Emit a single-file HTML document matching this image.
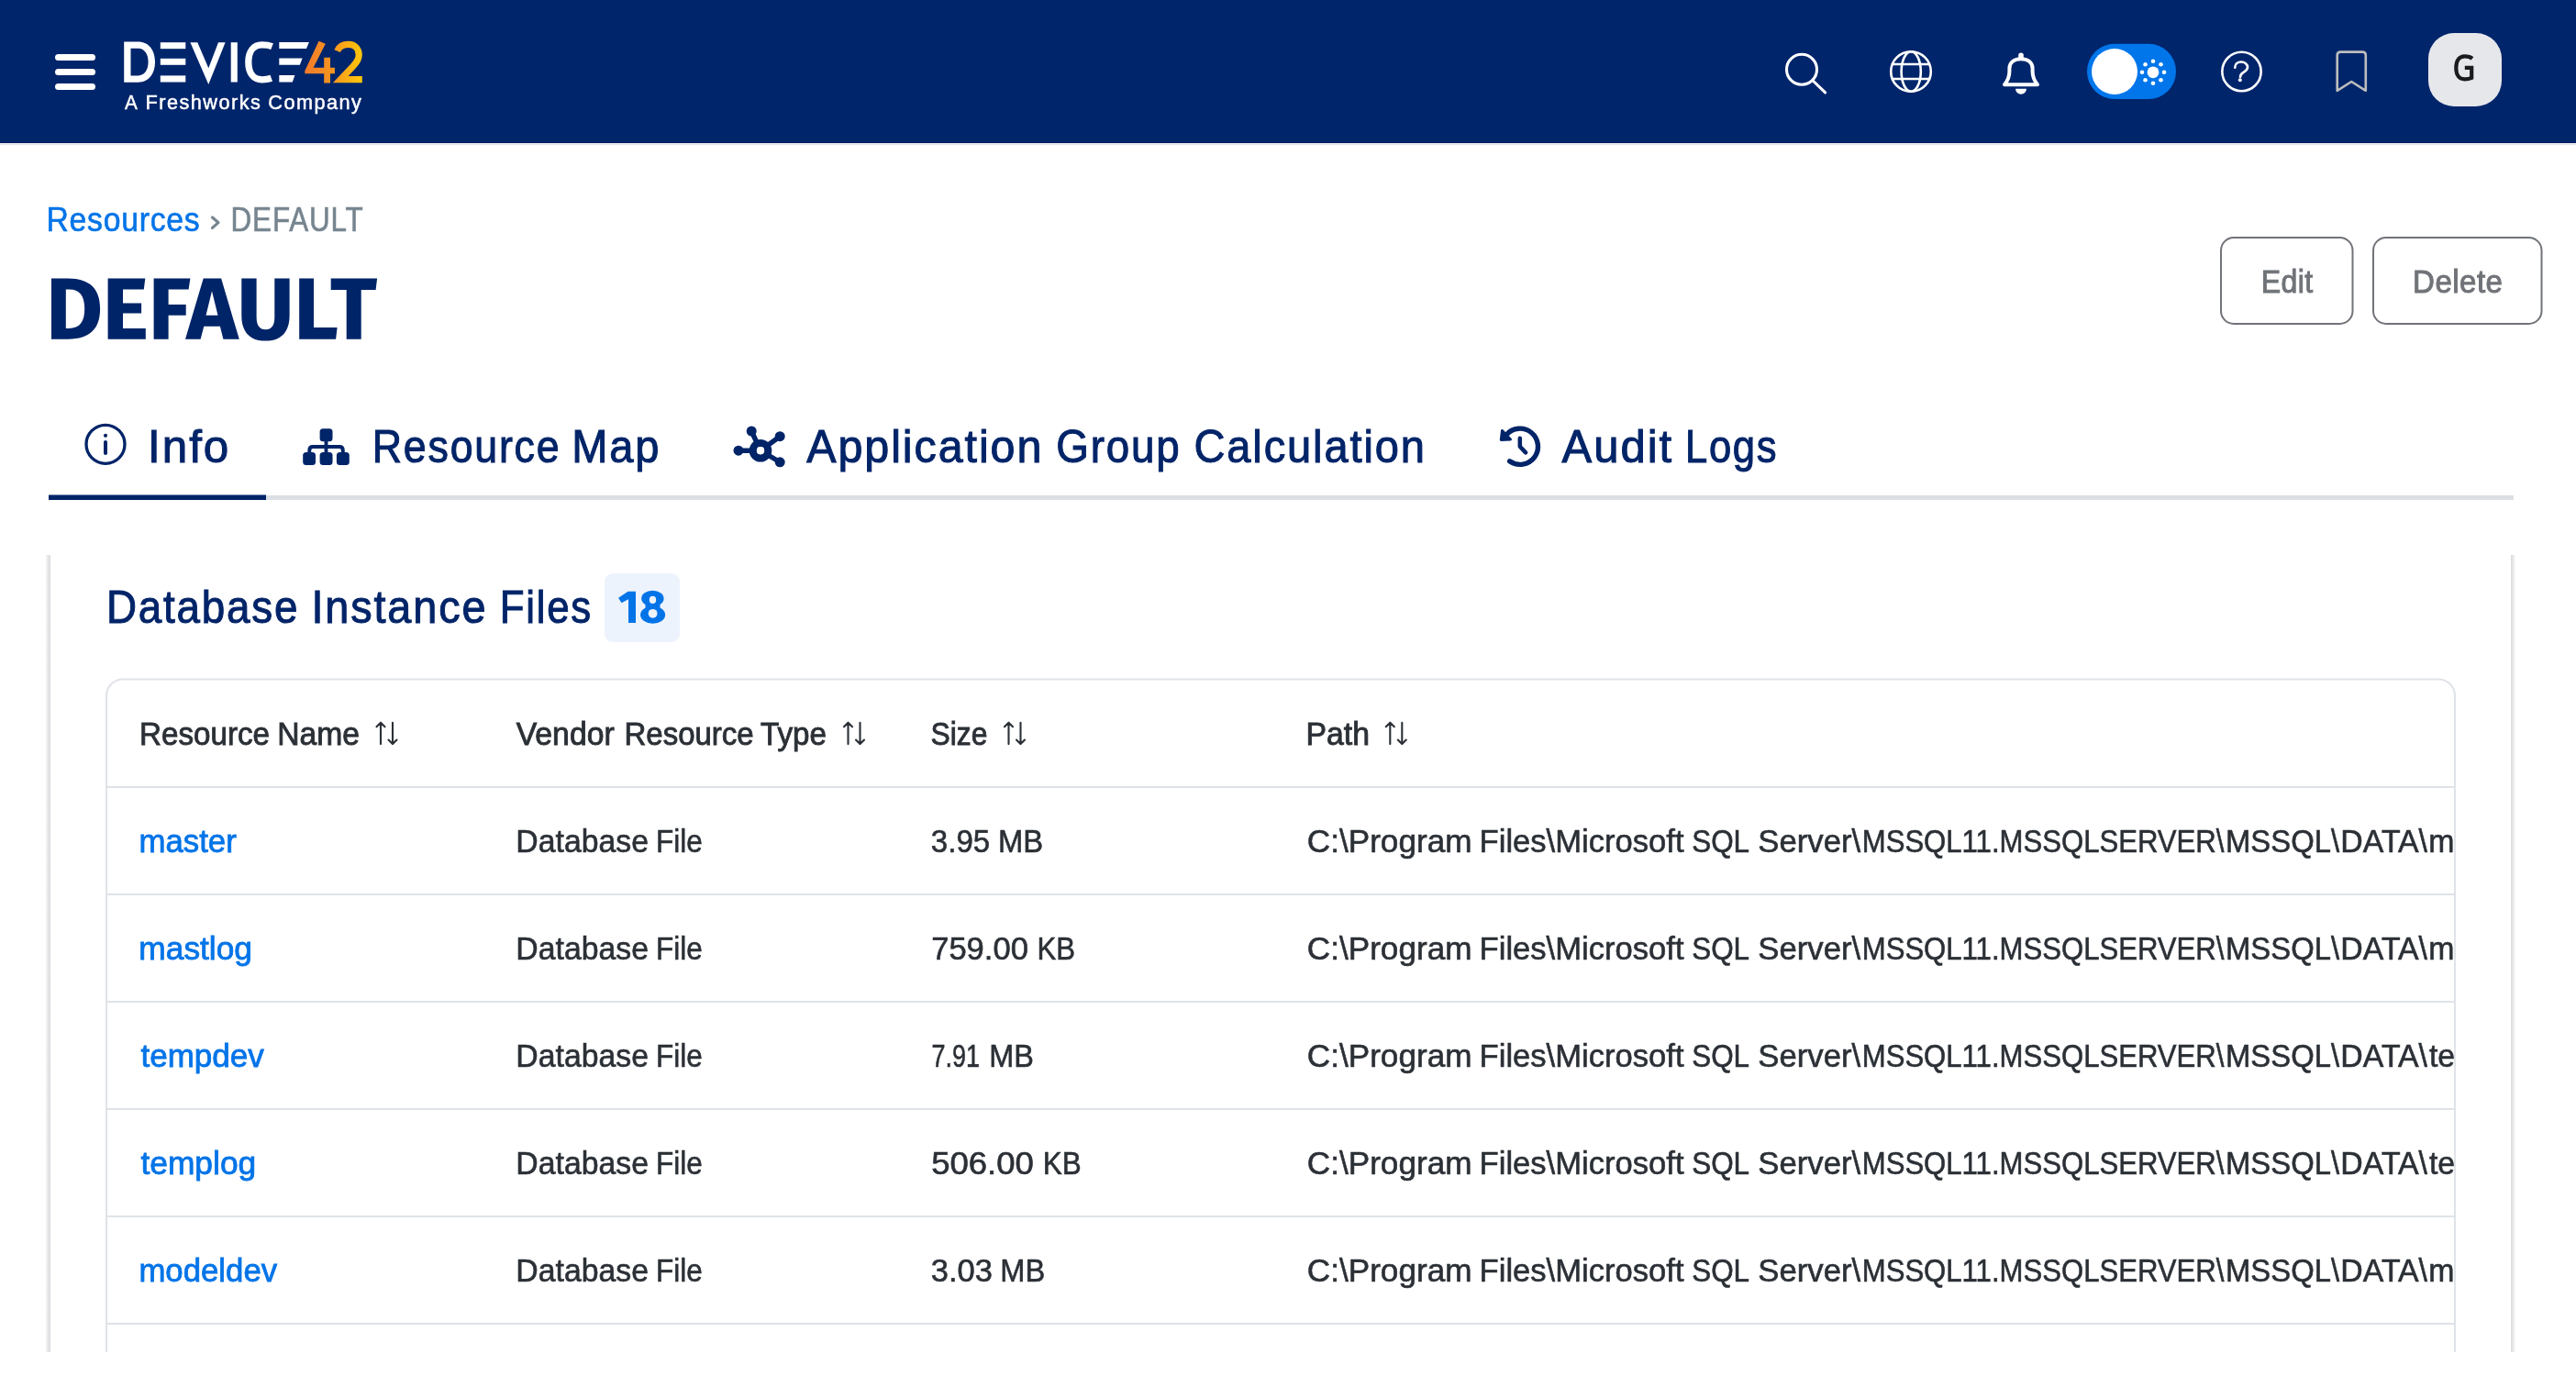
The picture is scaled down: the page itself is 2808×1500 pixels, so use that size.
<!DOCTYPE html>
<html><head><meta charset="utf-8"><title>DEFAULT - Resources</title>
<style>html,body{margin:0;padding:0;background:#fff;width:2808px;height:1500px;overflow:hidden;font-family:"Liberation Sans", sans-serif;}</style>
</head><body>
<svg width="2808" height="1500" viewBox="0 0 2808 1500" style="position:absolute;left:0;top:0;font-family:'Liberation Sans', sans-serif">
<rect x="0" y="0" width="2808" height="155" fill="#00256b"/><rect x="0" y="155" width="2808" height="1" fill="#001a62"/><rect x="0" y="156" width="2808" height="1" fill="#eceeef"/><rect x="0" y="157" width="2808" height="1.2" fill="#e2e5e8"/><rect x="60" y="59" width="44" height="7" rx="3.5" fill="#fff"/><rect x="60" y="75" width="44" height="7" rx="3.5" fill="#fff"/><rect x="60" y="91" width="44" height="7" rx="3.5" fill="#fff"/>
<g fill="#fff">
<path fill-rule="evenodd" d="M135.2,45.4 H150.5 C162.5,45.4 169,55 169,67.5 C169,80 162.5,89.7 150.5,89.7 H135.2 Z M142.5,52.8 H150.5 C157.5,52.8 161.6,59 161.6,67.5 C161.6,76 157.5,82.4 150.5,82.4 H142.5 Z"/>
<rect x="174.8" y="46.2" width="27.5" height="7"/>
<rect x="174.8" y="63.8" width="27.5" height="7"/>
<rect x="174.8" y="82.4" width="27.5" height="7.1"/>
<path d="M207.4,46.2 H215.3 L227.3,74.3 L238,46.2 H245.6 L227.3,91.9 Z"/>
<rect x="251.7" y="46.2" width="7.1" height="43.3"/>
<path d="M296.6,50.6 C293,49.2 289.5,48.9 285.5,48.9 C276.5,48.9 270.8,56 270.8,67.8 C270.8,79.8 276.5,86.8 285.5,86.8 C289.5,86.8 292.5,86.4 295.8,85.2" fill="none" stroke="#fff" stroke-width="7.3"/>
<path d="M304.3,46 H336.9 L334,53 H304.3 Z M304.3,63.6 H329.6 L326.9,70.7 H304.3 Z M304.3,82.1 H321.4 L318.8,89.5 H304.3 Z"/>
</g>
<defs><linearGradient id="lg" x1="332" y1="0" x2="395" y2="0" gradientUnits="userSpaceOnUse"><stop offset="0" stop-color="#f37a2c"/><stop offset="0.5" stop-color="#f7961f"/><stop offset="1" stop-color="#ffc80a"/></linearGradient>
<clipPath id="tclip"><rect x="0" y="0" width="2675" height="1500"/></clipPath>
<linearGradient id="pl" x1="0" y1="0" x2="1" y2="0"><stop offset="0" stop-color="#f5f5f6"/><stop offset="1" stop-color="#d9dadd"/></linearGradient>
<linearGradient id="pr" x1="0" y1="0" x2="1" y2="0"><stop offset="0" stop-color="#d9dadd"/><stop offset="1" stop-color="#f5f5f6"/></linearGradient>
</defs>
<path fill="url(#lg)" d="M347.5,44.8 L354.8,47.8 L341.6,73.7 H353.2 V62.8 H360 V73.7 H364.9 V80.2 H360 V90.5 H353.2 V80.2 H332.3 V77.2 Z"/>
<path fill="none" stroke="url(#lg)" stroke-width="7.2" stroke-linejoin="miter" d="M367.6,55.6 C369.8,50.5 374.5,48.4 380,48.4 C386.8,48.4 391.2,53.2 391.2,59.8 C391.2,64.6 389,67.8 385.6,71.4 L371.2,86.7 H394.8"/>

<g fill="none" stroke="#fff" stroke-linecap="round">
<circle cx="1964" cy="75.8" r="16.5" stroke-width="3.1"/>
<path d="M1976.2,88 L1989.6,100.9" stroke-width="3.1"/>
<circle cx="2083" cy="78" r="21.8" stroke-width="2.6"/>
<ellipse cx="2083.2" cy="78" rx="10.6" ry="21.8" stroke-width="2.6"/>
<path d="M2063,70 H2103 M2063,86 H2103" stroke-width="2.6"/>
<path d="M2185,92.3 C2188.5,88 2190.4,84 2190.4,78 V74.8 C2190.4,67.8 2196,64.3 2203,64.3 C2210,64.3 2215.6,67.8 2215.6,74.8 V78 C2215.6,84 2217.5,88 2221,92.3 Z" stroke-width="4" stroke-linejoin="round"/>
<circle cx="2443.5" cy="78" r="21.2" stroke-width="2.6"/>
<path d="M2436.2,73.8 C2436.2,69.5 2439.5,67.5 2443,67.5 C2447,67.5 2450,70 2450,73.2 C2450,76.5 2447.5,77.5 2445.5,78.8 C2443.5,80 2442,81 2442,84" stroke-width="2.6"/>
<path d="M2547.7,98.8 V60 C2547.7,57.6 2549.2,56.6 2551.5,56.6 H2575 C2577.3,56.6 2578.8,57.6 2578.8,60 V98.8 L2563.25,89 Z" stroke="#bdbdbd" stroke-width="2.6" stroke-linejoin="round"/>
</g>
<circle cx="2441.8" cy="87.3" r="2" fill="#fff"/>
<path d="M2197,96.8 H2209 A6,6 0 0 1 2197,96.8 Z" fill="#fff"/><rect x="2200.2" y="57.5" width="5.6" height="8" rx="2.8" fill="#fff"/>
<rect x="2275" y="47.7" width="97" height="60.3" rx="30.15" fill="#0076ea"/>
<circle cx="2305" cy="78" r="25" fill="#fff"/>
<circle cx="2347" cy="78.8" r="6.4" fill="#fff"/>
<circle cx="2359.00" cy="78.80" r="2.3" fill="#fff"/><circle cx="2355.49" cy="87.29" r="2.3" fill="#fff"/><circle cx="2347.00" cy="90.80" r="2.3" fill="#fff"/><circle cx="2338.51" cy="87.29" r="2.3" fill="#fff"/><circle cx="2335.00" cy="78.80" r="2.3" fill="#fff"/><circle cx="2338.51" cy="70.31" r="2.3" fill="#fff"/><circle cx="2347.00" cy="66.80" r="2.3" fill="#fff"/><circle cx="2355.49" cy="70.31" r="2.3" fill="#fff"/><rect x="2647" y="36" width="80" height="80" rx="28" fill="#e5e7eb"/><path d="M2695,63.8 C2692.8,62 2690.2,61.4 2686.6,61.4 C2680.2,61.4 2677.3,66.8 2677.3,73.9 C2677.3,81.2 2680.2,86.3 2686.6,86.3 C2689.6,86.3 2692.1,85.8 2694.2,84.8 V73.9 H2686.8" fill="none" stroke="#1b1b1d" stroke-width="4.2"/><rect x="2421" y="259" width="143.5" height="94" rx="14" fill="none" stroke="#707378" stroke-width="2"/><rect x="2587" y="259" width="183.5" height="94" rx="14" fill="none" stroke="#707378" stroke-width="2"/>
<path fill="#002468" fill-rule="evenodd" d="M56,303.6 H74 C98.5,303.6 109.1,315.5 109.1,336.6 C109.1,358 98.5,369.75 74,369.75 H56 Z M71.8,315.4 H75.2 C87,315.4 92.2,322.5 92.2,336.6 C92.2,351 87,358 75.2,358 H71.8 Z
M117.6,303.6 H158.3 L156.8,315.4 H134 V330.5 H154.1 V341.6 H134 V358 H158.8 V369.75 H117.6 Z
M167.6,303.6 H207.4 L205.6,315.4 H183.6 V332 H202.7 V343.7 H183.6 V369.75 H167.6 Z
M221.7,303.6 H241.1 L260.8,369.75 H243.4 L239.9,355.8 H222.3 L218.6,369.75 H202 Z M231,317.3 L237.5,343.7 H224.5 Z
M263.3,303.6 H279.6 V345.5 C279.6,355 283,359.2 289.5,359.2 C296,359.2 299.3,355 299.3,345.5 V303.6 H315.6 V344 C315.6,362.5 306,371.6 289.5,371.6 C273,371.6 263.3,362.5 263.3,344 Z
M326.2,303.6 H342 V356.9 H367.6 L366.1,369.75 H326.2 Z
M360.7,303.6 H411.1 L409.6,316 H393.7 V369.75 H377.7 V316 H360.7 Z"/>
<path d="M231.5,237 L238,242.6 L231.5,248.4" fill="none" stroke="#76858f" stroke-width="3.2" stroke-linecap="round" stroke-linejoin="round"/><rect x="53" y="540" width="2687" height="5" fill="#dcdfe4"/><rect x="53" y="539.5" width="237" height="5.5" fill="#002468"/>
<g fill="none" stroke="#002468" stroke-linecap="round">
<circle cx="115" cy="484.3" r="21" stroke-width="3.3"/>
<path d="M115,482 V494" stroke-width="4"/>
</g>
<circle cx="115" cy="474.8" r="2.1" fill="#002468"/>
<g fill="#002468">
<rect x="348.6" y="467.2" width="13.9" height="14" rx="3.5"/>
<rect x="330.2" y="492.9" width="13.8" height="14" rx="3.5"/>
<rect x="348.6" y="492.9" width="13.9" height="14" rx="3.5"/>
<rect x="366.9" y="492.9" width="13.9" height="14" rx="3.5"/>
</g>
<path d="M355.5,480 V494 M337.3,494 V491 C337.3,488.5 338.5,487 341,487 H370 C372.5,487 373.8,488.5 373.8,491 V494" fill="none" stroke="#002468" stroke-width="3.9"/>
<g fill="#002468">
<circle cx="819.2" cy="470" r="5.5"/><circle cx="850.2" cy="475.7" r="5.5"/>
<circle cx="805" cy="491.2" r="5.5"/><circle cx="850.2" cy="503.8" r="5.5"/>
</g>
<g fill="none" stroke="#002468">
<circle cx="829" cy="491.2" r="8.2" stroke-width="8.2"/>
<path d="M819.2,470 L829,491.2 L850.2,475.7 M805,491.2 H829 L850.2,503.8" stroke-width="5.4"/>
</g>
<circle cx="829" cy="491.2" r="4.1" fill="#fff"/>
<g fill="none" stroke="#002468" stroke-linecap="round" stroke-linejoin="round">
<path d="M1642,474 A19.6,19.6 0 1 1 1645.6,502.8" stroke-width="5.4"/>
<path d="M1656.8,477.7 V486.8 L1663.1,493.4" stroke-width="4.5"/>
<path d="M1637.5,469.5 L1646.5,479 L1636.3,479.5 Z" fill="#002468" stroke-width="3"/>
</g>
<circle cx="829" cy="491.2" r="4.1" fill="#fff"/>
<rect x="50" y="605" width="5" height="869" fill="url(#pl)"/><rect x="2737" y="605" width="4.5" height="869" fill="url(#pr)"/><rect x="659" y="625" width="82" height="75" rx="9" fill="#edf3fc"/>
<path fill="#0274e8" d="M684.6,644.7 H693 V679 H685 V653.2 L677.5,657.3 L674.1,651.7 Z"/>
<ellipse cx="711.4" cy="652.4" rx="12.2" ry="8.7" fill="#0274e8"/>
<ellipse cx="711.6" cy="670.2" rx="13.5" ry="9.5" fill="#0274e8"/>
<rect x="703.5" y="658.2" width="16" height="5" fill="#0274e8"/>
<ellipse cx="711.5" cy="653.9" rx="3.7" ry="4.1" fill="#edf3fc"/>
<ellipse cx="711.6" cy="668.8" rx="4.9" ry="4.9" fill="#edf3fc"/>
<path d="M116,1474 V758.5 A18,18 0 0 1 134,740.5 H2658 A18,18 0 0 1 2676,758.5 V1474" fill="none" stroke="#dfe3e8" stroke-width="2"/><rect x="117" y="857" width="2558" height="2" fill="#dfe3e8"/><rect x="117" y="974" width="2558" height="2" fill="#dfe3e8"/><rect x="117" y="1091" width="2558" height="2" fill="#dfe3e8"/><rect x="117" y="1208" width="2558" height="2" fill="#dfe3e8"/><rect x="117" y="1325" width="2558" height="2" fill="#dfe3e8"/><rect x="117" y="1442" width="2558" height="2" fill="#dfe3e8"/><path d="M415,811.1 V787.7 M410.5,792.3000000000001 L415,787.7 L419.5,792.3000000000001 M428,787.7 V811.1 M423.5,806.5 L428,811.1 L432.5,806.5" fill="none" stroke="#2b3036" stroke-width="2.1" stroke-linecap="round" stroke-linejoin="round"/><path d="M924.5,811.1 V787.7 M920.0,792.3000000000001 L924.5,787.7 L929.0,792.3000000000001 M937.5,787.7 V811.1 M933.0,806.5 L937.5,811.1 L942.0,806.5" fill="none" stroke="#2b3036" stroke-width="2.1" stroke-linecap="round" stroke-linejoin="round"/><path d="M1099.5,811.1 V787.7 M1095.0,792.3000000000001 L1099.5,787.7 L1104.0,792.3000000000001 M1112.5,787.7 V811.1 M1108.0,806.5 L1112.5,811.1 L1117.0,806.5" fill="none" stroke="#2b3036" stroke-width="2.1" stroke-linecap="round" stroke-linejoin="round"/><path d="M1515.3,811.1 V787.7 M1510.8,792.3000000000001 L1515.3,787.7 L1519.8,792.3000000000001 M1528.3,787.7 V811.1 M1523.8,806.5 L1528.3,811.1 L1532.8,806.5" fill="none" stroke="#2b3036" stroke-width="2.1" stroke-linecap="round" stroke-linejoin="round"/>
<g style="opacity:0.999"><text x="136.05" y="119.10" font-size="22" font-weight="normal" fill="#ffffff" stroke="#ffffff" stroke-width="0.5" textLength="15.20" lengthAdjust="spacingAndGlyphs" letter-spacing="1.5">A</text><text x="158.56" y="119.10" font-size="22" font-weight="normal" fill="#ffffff" stroke="#ffffff" stroke-width="0.5" textLength="126.76" lengthAdjust="spacingAndGlyphs" letter-spacing="1.5">Freshworks</text><text x="292.26" y="119.10" font-size="22" font-weight="normal" fill="#ffffff" stroke="#ffffff" stroke-width="0.5" textLength="103.16" lengthAdjust="spacingAndGlyphs" letter-spacing="1.5">Company</text><text x="50.43" y="251.70" font-size="36" font-weight="normal" fill="#0274e8" stroke="#0274e8" stroke-width="0.6" textLength="167.96" lengthAdjust="spacingAndGlyphs" letter-spacing="0.8">Resources</text><text x="251.56" y="251.70" font-size="36" font-weight="normal" fill="#76858f" stroke="#76858f" stroke-width="0.6" textLength="145.01" lengthAdjust="spacingAndGlyphs" letter-spacing="1">DEFAULT</text><text x="2464.67" y="318.70" font-size="35" font-weight="normal" fill="#707378" stroke="#707378" stroke-width="1.0" textLength="57.04" lengthAdjust="spacingAndGlyphs" letter-spacing="0.5">Edit</text><text x="2630.11" y="318.70" font-size="35" font-weight="normal" fill="#707378" stroke="#707378" stroke-width="1.0" textLength="98.24" lengthAdjust="spacingAndGlyphs" letter-spacing="0.5">Delete</text><text x="161.05" y="504.00" font-size="50" font-weight="normal" fill="#002468" stroke="#002468" stroke-width="1.0" textLength="90.21" lengthAdjust="spacingAndGlyphs" letter-spacing="2">Info</text><text x="405.77" y="504.00" font-size="50" font-weight="normal" fill="#002468" stroke="#002468" stroke-width="1.0" textLength="205.63" lengthAdjust="spacingAndGlyphs" letter-spacing="2">Resource</text><text x="623.13" y="504.00" font-size="50" font-weight="normal" fill="#002468" stroke="#002468" stroke-width="1.0" textLength="97.25" lengthAdjust="spacingAndGlyphs" letter-spacing="2">Map</text><text x="879.20" y="504.00" font-size="50" font-weight="normal" fill="#002468" stroke="#002468" stroke-width="1.0" textLength="258.16" lengthAdjust="spacingAndGlyphs" letter-spacing="2">Application</text><text x="1151.27" y="504.00" font-size="50" font-weight="normal" fill="#002468" stroke="#002468" stroke-width="1.0" textLength="136.31" lengthAdjust="spacingAndGlyphs" letter-spacing="2">Group</text><text x="1301.42" y="504.00" font-size="50" font-weight="normal" fill="#002468" stroke="#002468" stroke-width="1.0" textLength="253.51" lengthAdjust="spacingAndGlyphs" letter-spacing="2">Calculation</text><text x="1702.60" y="504.00" font-size="50" font-weight="normal" fill="#002468" stroke="#002468" stroke-width="1.0" textLength="121.45" lengthAdjust="spacingAndGlyphs" letter-spacing="2">Audit</text><text x="1836.91" y="504.00" font-size="50" font-weight="normal" fill="#002468" stroke="#002468" stroke-width="1.0" textLength="101.50" lengthAdjust="spacingAndGlyphs" letter-spacing="2">Logs</text><text x="115.88" y="679.30" font-size="50.5" font-weight="normal" fill="#002468" stroke="#002468" stroke-width="1.0" textLength="210.32" lengthAdjust="spacingAndGlyphs" letter-spacing="2">Database</text><text x="339.49" y="679.30" font-size="50.5" font-weight="normal" fill="#002468" stroke="#002468" stroke-width="1.0" textLength="191.80" lengthAdjust="spacingAndGlyphs" letter-spacing="2">Instance</text><text x="544.73" y="679.30" font-size="50.5" font-weight="normal" fill="#002468" stroke="#002468" stroke-width="1.0" textLength="101.30" lengthAdjust="spacingAndGlyphs" letter-spacing="2">Files</text><text x="152.05" y="811.65" font-size="35" font-weight="normal" fill="#2b3036" stroke="#2b3036" stroke-width="0.9" textLength="141.98" lengthAdjust="spacingAndGlyphs">Resource</text><text x="302.13" y="811.65" font-size="35" font-weight="normal" fill="#2b3036" stroke="#2b3036" stroke-width="0.9" textLength="89.83" lengthAdjust="spacingAndGlyphs">Name</text><text x="562.65" y="811.65" font-size="35" font-weight="normal" fill="#2b3036" stroke="#2b3036" stroke-width="0.9" textLength="107.07" lengthAdjust="spacingAndGlyphs">Vendor</text><text x="680.46" y="811.65" font-size="35" font-weight="normal" fill="#2b3036" stroke="#2b3036" stroke-width="0.9" textLength="141.27" lengthAdjust="spacingAndGlyphs">Resource</text><text x="829.05" y="811.65" font-size="35" font-weight="normal" fill="#2b3036" stroke="#2b3036" stroke-width="0.9" textLength="71.89" lengthAdjust="spacingAndGlyphs">Type</text><text x="1014.54" y="811.65" font-size="35" font-weight="normal" fill="#2b3036" stroke="#2b3036" stroke-width="0.9" textLength="61.94" lengthAdjust="spacingAndGlyphs">Size</text><text x="1423.52" y="811.65" font-size="35" font-weight="normal" fill="#2b3036" stroke="#2b3036" stroke-width="0.9" textLength="69.44" lengthAdjust="spacingAndGlyphs">Path</text><text x="151.41" y="928.50" font-size="35" font-weight="normal" fill="#0274e8" stroke="#0274e8" stroke-width="0.8" textLength="106.35" lengthAdjust="spacingAndGlyphs">master</text><text x="562.27" y="928.60" font-size="35" font-weight="normal" fill="#2b3036" stroke="#2b3036" stroke-width="0.6" textLength="144.75" lengthAdjust="spacingAndGlyphs">Database</text><text x="715.10" y="928.60" font-size="35" font-weight="normal" fill="#2b3036" stroke="#2b3036" stroke-width="0.6" textLength="50.72" lengthAdjust="spacingAndGlyphs">File</text><text x="1014.86" y="928.60" font-size="35" font-weight="normal" fill="#2b3036" stroke="#2b3036" stroke-width="0.6" textLength="64.22" lengthAdjust="spacingAndGlyphs">3.95</text><text x="1087.92" y="928.60" font-size="35" font-weight="normal" fill="#2b3036" stroke="#2b3036" stroke-width="0.6" textLength="49.24" lengthAdjust="spacingAndGlyphs">MB</text><text x="1424.80" y="928.60" font-size="35" font-weight="normal" fill="#2b3036" stroke="#2b3036" stroke-width="0.6" textLength="179.67" lengthAdjust="spacingAndGlyphs" clip-path="url(#tclip)">C:\Program</text><text x="1612.62" y="928.60" font-size="35" font-weight="normal" fill="#2b3036" stroke="#2b3036" stroke-width="0.6" textLength="222.90" lengthAdjust="spacingAndGlyphs" clip-path="url(#tclip)">Files\Microsoft</text><text x="1844.20" y="928.60" font-size="35" font-weight="normal" fill="#2b3036" stroke="#2b3036" stroke-width="0.6" textLength="62.92" lengthAdjust="spacingAndGlyphs" clip-path="url(#tclip)">SQL</text><text x="1916.31" y="928.60" font-size="35" font-weight="normal" fill="#2b3036" stroke="#2b3036" stroke-width="0.6" textLength="111.82" lengthAdjust="spacingAndGlyphs" clip-path="url(#tclip)">Server\</text><text x="2029.72" y="928.60" font-size="35" font-weight="normal" fill="#2b3036" stroke="#2b3036" stroke-width="0.6" textLength="394.73" lengthAdjust="spacingAndGlyphs" clip-path="url(#tclip)">MSSQL11.MSSQLSERVER\</text><text x="2426.02" y="928.60" font-size="35" font-weight="normal" fill="#2b3036" stroke="#2b3036" stroke-width="0.6" textLength="124.02" lengthAdjust="spacingAndGlyphs" clip-path="url(#tclip)">MSSQL\</text><text x="2551.37" y="928.60" font-size="35" font-weight="normal" fill="#2b3036" stroke="#2b3036" stroke-width="0.6" textLength="94.67" lengthAdjust="spacingAndGlyphs" clip-path="url(#tclip)">DATA\</text><text x="2647.37" y="928.60" font-size="35" font-weight="normal" fill="#2b3036" stroke="#2b3036" stroke-width="0.6" textLength="75.23" lengthAdjust="spacingAndGlyphs" clip-path="url(#tclip)">mmp</text><text x="151.38" y="1045.50" font-size="35" font-weight="normal" fill="#0274e8" stroke="#0274e8" stroke-width="0.8" textLength="123.59" lengthAdjust="spacingAndGlyphs">mastlog</text><text x="562.27" y="1045.60" font-size="35" font-weight="normal" fill="#2b3036" stroke="#2b3036" stroke-width="0.6" textLength="144.75" lengthAdjust="spacingAndGlyphs">Database</text><text x="715.10" y="1045.60" font-size="35" font-weight="normal" fill="#2b3036" stroke="#2b3036" stroke-width="0.6" textLength="50.72" lengthAdjust="spacingAndGlyphs">File</text><text x="1015.21" y="1045.60" font-size="35" font-weight="normal" fill="#2b3036" stroke="#2b3036" stroke-width="0.6" textLength="105.65" lengthAdjust="spacingAndGlyphs">759.00</text><text x="1130.42" y="1045.60" font-size="35" font-weight="normal" fill="#2b3036" stroke="#2b3036" stroke-width="0.6" textLength="41.58" lengthAdjust="spacingAndGlyphs">KB</text><text x="1424.80" y="1045.60" font-size="35" font-weight="normal" fill="#2b3036" stroke="#2b3036" stroke-width="0.6" textLength="179.67" lengthAdjust="spacingAndGlyphs" clip-path="url(#tclip)">C:\Program</text><text x="1612.62" y="1045.60" font-size="35" font-weight="normal" fill="#2b3036" stroke="#2b3036" stroke-width="0.6" textLength="222.90" lengthAdjust="spacingAndGlyphs" clip-path="url(#tclip)">Files\Microsoft</text><text x="1844.20" y="1045.60" font-size="35" font-weight="normal" fill="#2b3036" stroke="#2b3036" stroke-width="0.6" textLength="62.92" lengthAdjust="spacingAndGlyphs" clip-path="url(#tclip)">SQL</text><text x="1916.31" y="1045.60" font-size="35" font-weight="normal" fill="#2b3036" stroke="#2b3036" stroke-width="0.6" textLength="111.82" lengthAdjust="spacingAndGlyphs" clip-path="url(#tclip)">Server\</text><text x="2029.72" y="1045.60" font-size="35" font-weight="normal" fill="#2b3036" stroke="#2b3036" stroke-width="0.6" textLength="394.73" lengthAdjust="spacingAndGlyphs" clip-path="url(#tclip)">MSSQL11.MSSQLSERVER\</text><text x="2426.02" y="1045.60" font-size="35" font-weight="normal" fill="#2b3036" stroke="#2b3036" stroke-width="0.6" textLength="124.02" lengthAdjust="spacingAndGlyphs" clip-path="url(#tclip)">MSSQL\</text><text x="2551.37" y="1045.60" font-size="35" font-weight="normal" fill="#2b3036" stroke="#2b3036" stroke-width="0.6" textLength="94.67" lengthAdjust="spacingAndGlyphs" clip-path="url(#tclip)">DATA\</text><text x="2647.37" y="1045.60" font-size="35" font-weight="normal" fill="#2b3036" stroke="#2b3036" stroke-width="0.6" textLength="75.23" lengthAdjust="spacingAndGlyphs" clip-path="url(#tclip)">mmp</text><text x="153.40" y="1162.50" font-size="35" font-weight="normal" fill="#0274e8" stroke="#0274e8" stroke-width="0.8" textLength="134.50" lengthAdjust="spacingAndGlyphs">tempdev</text><text x="562.27" y="1162.60" font-size="35" font-weight="normal" fill="#2b3036" stroke="#2b3036" stroke-width="0.6" textLength="144.75" lengthAdjust="spacingAndGlyphs">Database</text><text x="715.10" y="1162.60" font-size="35" font-weight="normal" fill="#2b3036" stroke="#2b3036" stroke-width="0.6" textLength="50.72" lengthAdjust="spacingAndGlyphs">File</text><text x="1015.43" y="1162.60" font-size="35" font-weight="normal" fill="#2b3036" stroke="#2b3036" stroke-width="0.6" textLength="52.50" lengthAdjust="spacingAndGlyphs">7.91</text><text x="1078.34" y="1162.60" font-size="35" font-weight="normal" fill="#2b3036" stroke="#2b3036" stroke-width="0.6" textLength="48.70" lengthAdjust="spacingAndGlyphs">MB</text><text x="1424.80" y="1162.60" font-size="35" font-weight="normal" fill="#2b3036" stroke="#2b3036" stroke-width="0.6" textLength="179.67" lengthAdjust="spacingAndGlyphs" clip-path="url(#tclip)">C:\Program</text><text x="1612.62" y="1162.60" font-size="35" font-weight="normal" fill="#2b3036" stroke="#2b3036" stroke-width="0.6" textLength="222.90" lengthAdjust="spacingAndGlyphs" clip-path="url(#tclip)">Files\Microsoft</text><text x="1844.20" y="1162.60" font-size="35" font-weight="normal" fill="#2b3036" stroke="#2b3036" stroke-width="0.6" textLength="62.92" lengthAdjust="spacingAndGlyphs" clip-path="url(#tclip)">SQL</text><text x="1916.31" y="1162.60" font-size="35" font-weight="normal" fill="#2b3036" stroke="#2b3036" stroke-width="0.6" textLength="111.82" lengthAdjust="spacingAndGlyphs" clip-path="url(#tclip)">Server\</text><text x="2029.72" y="1162.60" font-size="35" font-weight="normal" fill="#2b3036" stroke="#2b3036" stroke-width="0.6" textLength="394.73" lengthAdjust="spacingAndGlyphs" clip-path="url(#tclip)">MSSQL11.MSSQLSERVER\</text><text x="2426.02" y="1162.60" font-size="35" font-weight="normal" fill="#2b3036" stroke="#2b3036" stroke-width="0.6" textLength="124.02" lengthAdjust="spacingAndGlyphs" clip-path="url(#tclip)">MSSQL\</text><text x="2551.37" y="1162.60" font-size="35" font-weight="normal" fill="#2b3036" stroke="#2b3036" stroke-width="0.6" textLength="94.67" lengthAdjust="spacingAndGlyphs" clip-path="url(#tclip)">DATA\</text><text x="2647.90" y="1162.60" font-size="35" font-weight="normal" fill="#2b3036" stroke="#2b3036" stroke-width="0.6" textLength="75.26" lengthAdjust="spacingAndGlyphs" clip-path="url(#tclip)">temp</text><text x="153.40" y="1279.50" font-size="35" font-weight="normal" fill="#0274e8" stroke="#0274e8" stroke-width="0.8" textLength="125.88" lengthAdjust="spacingAndGlyphs">templog</text><text x="562.27" y="1279.60" font-size="35" font-weight="normal" fill="#2b3036" stroke="#2b3036" stroke-width="0.6" textLength="144.75" lengthAdjust="spacingAndGlyphs">Database</text><text x="715.10" y="1279.60" font-size="35" font-weight="normal" fill="#2b3036" stroke="#2b3036" stroke-width="0.6" textLength="50.72" lengthAdjust="spacingAndGlyphs">File</text><text x="1015.16" y="1279.60" font-size="35" font-weight="normal" fill="#2b3036" stroke="#2b3036" stroke-width="0.6" textLength="111.73" lengthAdjust="spacingAndGlyphs">506.00</text><text x="1136.71" y="1279.60" font-size="35" font-weight="normal" fill="#2b3036" stroke="#2b3036" stroke-width="0.6" textLength="41.90" lengthAdjust="spacingAndGlyphs">KB</text><text x="1424.80" y="1279.60" font-size="35" font-weight="normal" fill="#2b3036" stroke="#2b3036" stroke-width="0.6" textLength="179.67" lengthAdjust="spacingAndGlyphs" clip-path="url(#tclip)">C:\Program</text><text x="1612.62" y="1279.60" font-size="35" font-weight="normal" fill="#2b3036" stroke="#2b3036" stroke-width="0.6" textLength="222.90" lengthAdjust="spacingAndGlyphs" clip-path="url(#tclip)">Files\Microsoft</text><text x="1844.20" y="1279.60" font-size="35" font-weight="normal" fill="#2b3036" stroke="#2b3036" stroke-width="0.6" textLength="62.92" lengthAdjust="spacingAndGlyphs" clip-path="url(#tclip)">SQL</text><text x="1916.31" y="1279.60" font-size="35" font-weight="normal" fill="#2b3036" stroke="#2b3036" stroke-width="0.6" textLength="111.82" lengthAdjust="spacingAndGlyphs" clip-path="url(#tclip)">Server\</text><text x="2029.72" y="1279.60" font-size="35" font-weight="normal" fill="#2b3036" stroke="#2b3036" stroke-width="0.6" textLength="394.73" lengthAdjust="spacingAndGlyphs" clip-path="url(#tclip)">MSSQL11.MSSQLSERVER\</text><text x="2426.02" y="1279.60" font-size="35" font-weight="normal" fill="#2b3036" stroke="#2b3036" stroke-width="0.6" textLength="124.02" lengthAdjust="spacingAndGlyphs" clip-path="url(#tclip)">MSSQL\</text><text x="2551.37" y="1279.60" font-size="35" font-weight="normal" fill="#2b3036" stroke="#2b3036" stroke-width="0.6" textLength="94.67" lengthAdjust="spacingAndGlyphs" clip-path="url(#tclip)">DATA\</text><text x="2647.90" y="1279.60" font-size="35" font-weight="normal" fill="#2b3036" stroke="#2b3036" stroke-width="0.6" textLength="75.26" lengthAdjust="spacingAndGlyphs" clip-path="url(#tclip)">temp</text><text x="151.41" y="1396.50" font-size="35" font-weight="normal" fill="#0274e8" stroke="#0274e8" stroke-width="0.8" textLength="150.69" lengthAdjust="spacingAndGlyphs">modeldev</text><text x="562.27" y="1396.60" font-size="35" font-weight="normal" fill="#2b3036" stroke="#2b3036" stroke-width="0.6" textLength="144.75" lengthAdjust="spacingAndGlyphs">Database</text><text x="715.10" y="1396.60" font-size="35" font-weight="normal" fill="#2b3036" stroke="#2b3036" stroke-width="0.6" textLength="50.72" lengthAdjust="spacingAndGlyphs">File</text><text x="1014.82" y="1396.60" font-size="35" font-weight="normal" fill="#2b3036" stroke="#2b3036" stroke-width="0.6" textLength="67.03" lengthAdjust="spacingAndGlyphs">3.03</text><text x="1090.24" y="1396.60" font-size="35" font-weight="normal" fill="#2b3036" stroke="#2b3036" stroke-width="0.6" textLength="48.92" lengthAdjust="spacingAndGlyphs">MB</text><text x="1424.80" y="1396.60" font-size="35" font-weight="normal" fill="#2b3036" stroke="#2b3036" stroke-width="0.6" textLength="179.67" lengthAdjust="spacingAndGlyphs" clip-path="url(#tclip)">C:\Program</text><text x="1612.62" y="1396.60" font-size="35" font-weight="normal" fill="#2b3036" stroke="#2b3036" stroke-width="0.6" textLength="222.90" lengthAdjust="spacingAndGlyphs" clip-path="url(#tclip)">Files\Microsoft</text><text x="1844.20" y="1396.60" font-size="35" font-weight="normal" fill="#2b3036" stroke="#2b3036" stroke-width="0.6" textLength="62.92" lengthAdjust="spacingAndGlyphs" clip-path="url(#tclip)">SQL</text><text x="1916.31" y="1396.60" font-size="35" font-weight="normal" fill="#2b3036" stroke="#2b3036" stroke-width="0.6" textLength="111.82" lengthAdjust="spacingAndGlyphs" clip-path="url(#tclip)">Server\</text><text x="2029.72" y="1396.60" font-size="35" font-weight="normal" fill="#2b3036" stroke="#2b3036" stroke-width="0.6" textLength="394.73" lengthAdjust="spacingAndGlyphs" clip-path="url(#tclip)">MSSQL11.MSSQLSERVER\</text><text x="2426.02" y="1396.60" font-size="35" font-weight="normal" fill="#2b3036" stroke="#2b3036" stroke-width="0.6" textLength="124.02" lengthAdjust="spacingAndGlyphs" clip-path="url(#tclip)">MSSQL\</text><text x="2551.37" y="1396.60" font-size="35" font-weight="normal" fill="#2b3036" stroke="#2b3036" stroke-width="0.6" textLength="94.67" lengthAdjust="spacingAndGlyphs" clip-path="url(#tclip)">DATA\</text><text x="2647.37" y="1396.60" font-size="35" font-weight="normal" fill="#2b3036" stroke="#2b3036" stroke-width="0.6" textLength="75.23" lengthAdjust="spacingAndGlyphs" clip-path="url(#tclip)">mmp</text></g>
<rect x="0" y="1474" width="2808" height="26" fill="#fff"/>
</svg>
</body></html>
